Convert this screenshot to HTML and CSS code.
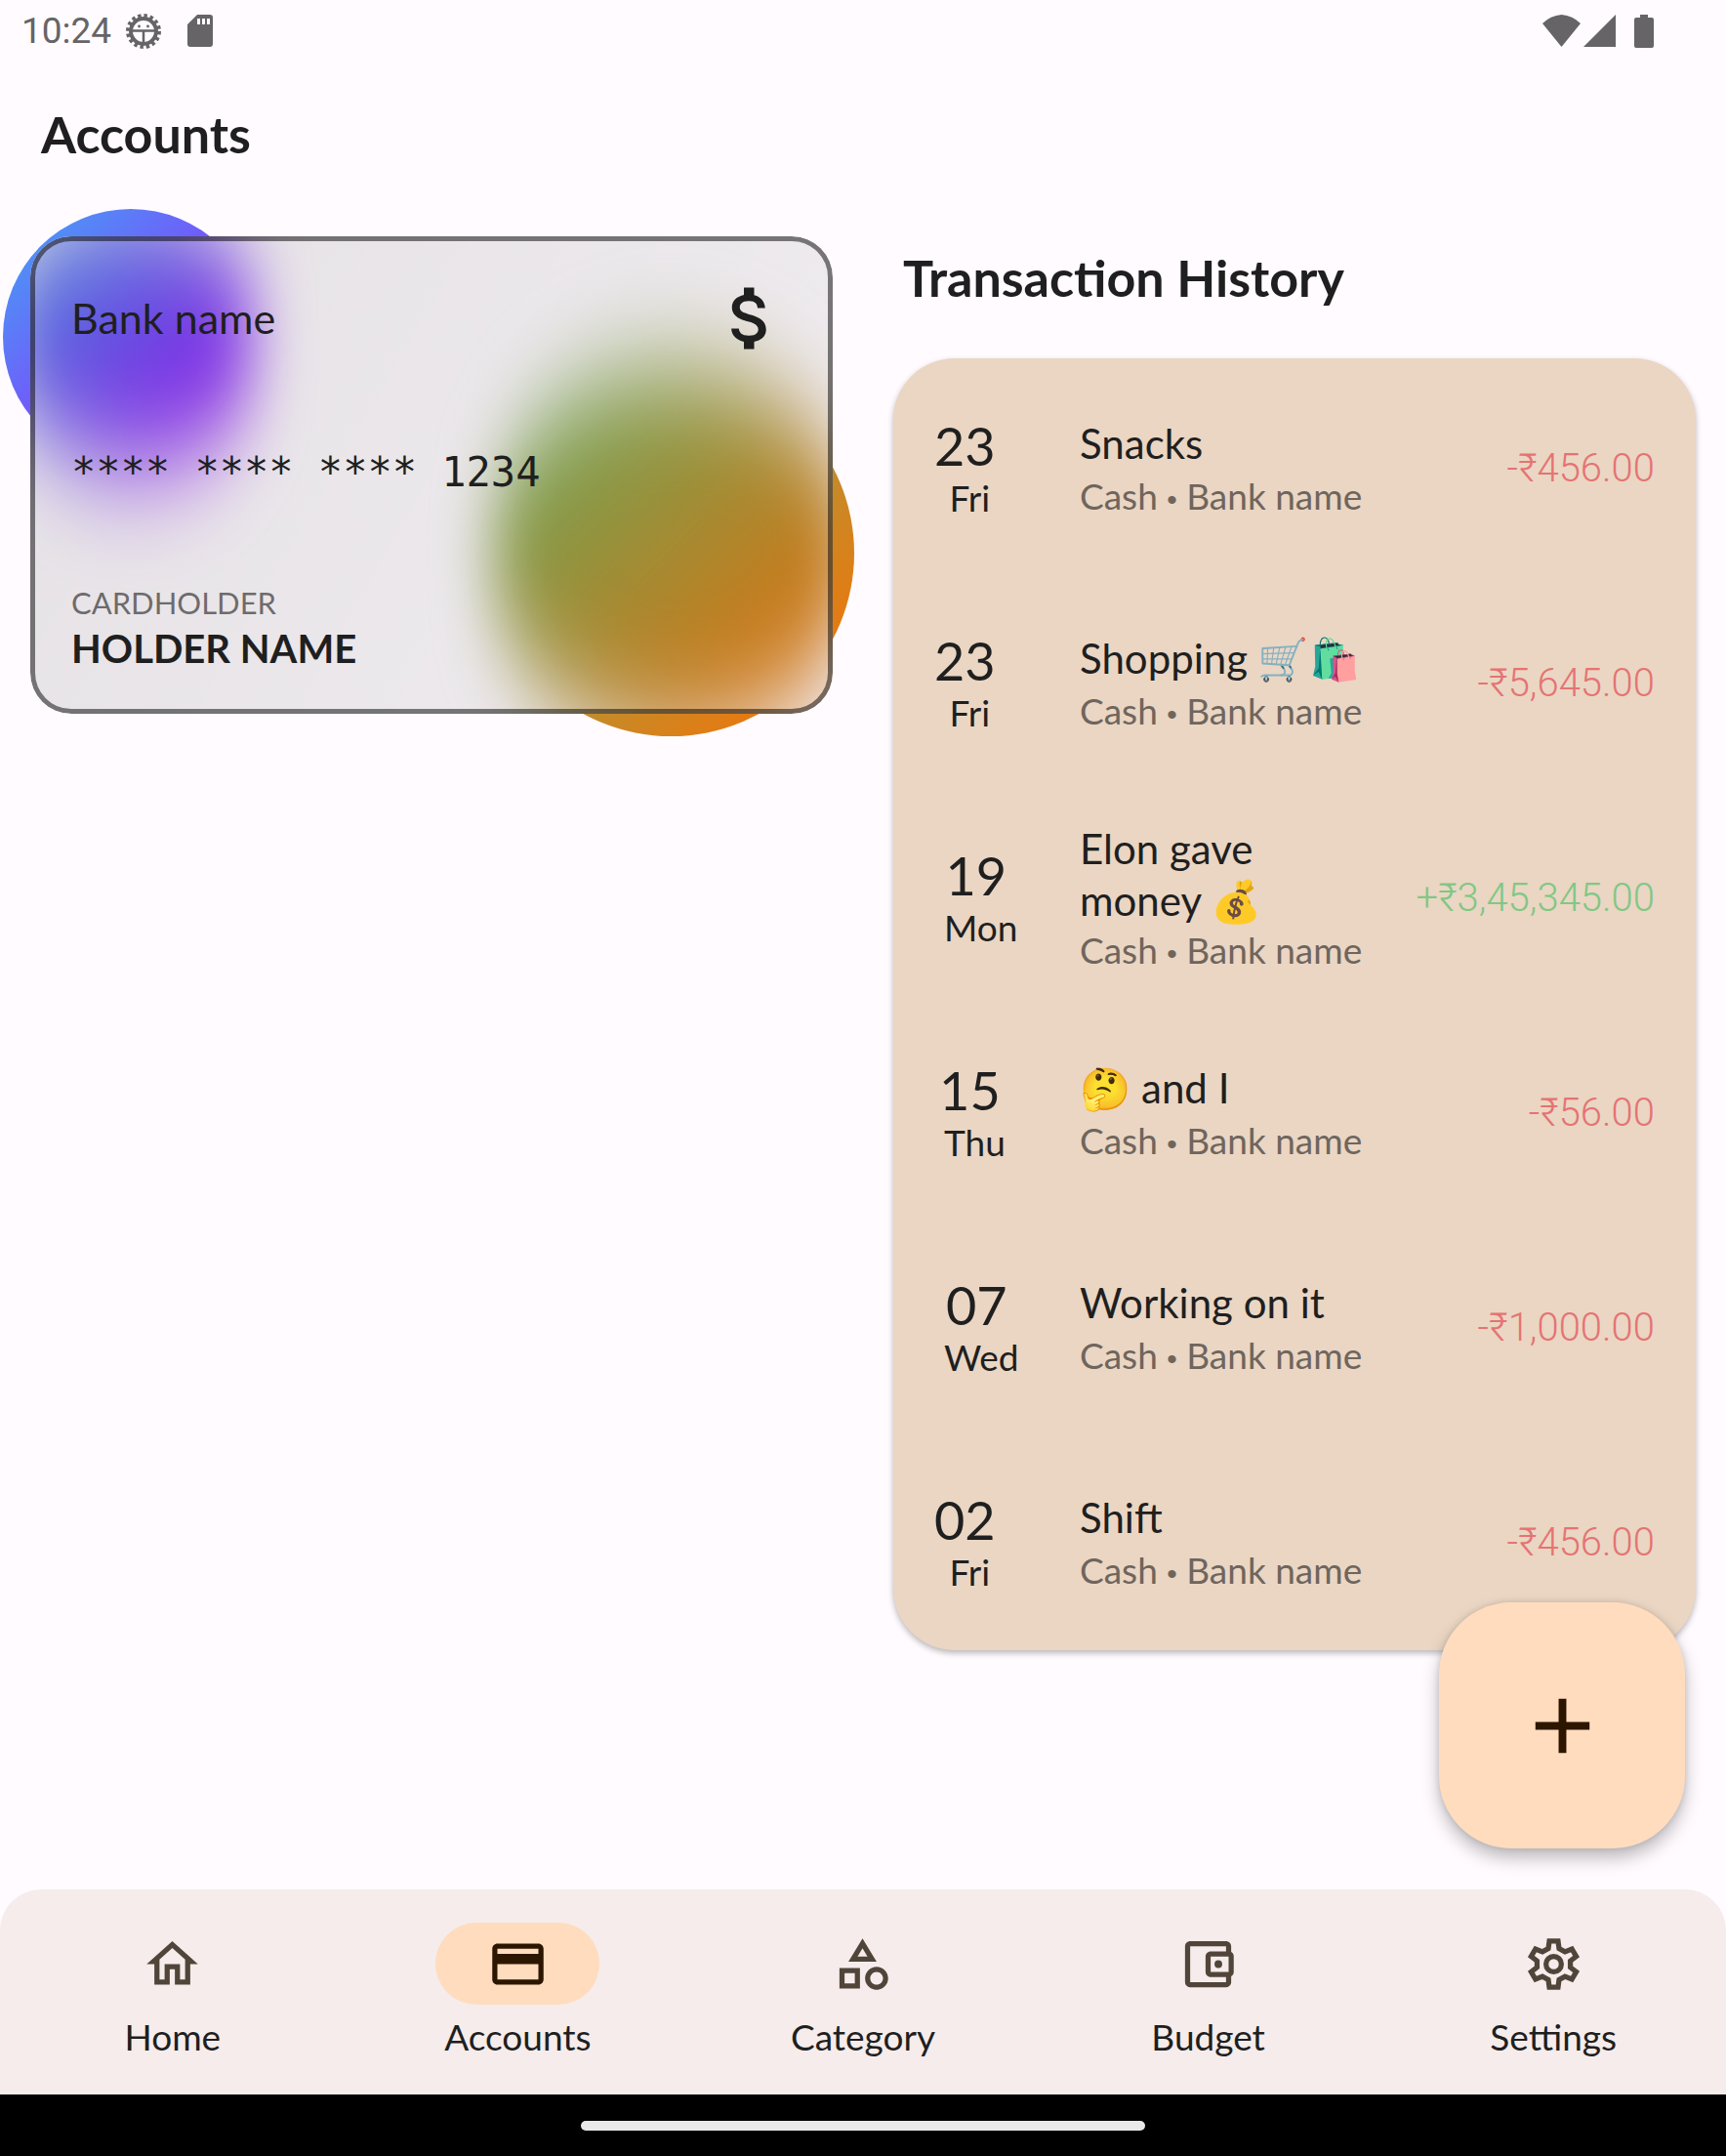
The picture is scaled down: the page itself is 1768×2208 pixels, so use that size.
FILE: index.html
```html
<!DOCTYPE html>
<html lang="en">
<head>
<meta charset="utf-8">
<meta name="viewport" content="width=device-width, initial-scale=1">
<title>Accounts</title>
<link rel="stylesheet" href="styles.css">
</head>
<body>
<div class="status">
  <span class="clock">10:24</span>
  <svg class="status-gear" viewBox="0 0 36 36" aria-hidden="true">
    <circle cx="18" cy="18" r="13" fill="none" stroke="currentColor" stroke-width="4"/>
    <circle cx="18" cy="18" r="16" fill="none" stroke="currentColor" stroke-width="4" stroke-dasharray="3.4 2.88"/>
    <path d="M5 17.500h26M18 18v13" stroke="currentColor" stroke-width="2.500" fill="none"/>
    <circle cx="13.500" cy="13" r="1.400" fill="currentColor"/><circle cx="22.500" cy="13" r="1.400" fill="currentColor"/>
  </svg>
  <svg class="status-sd" viewBox="0 0 26 34" aria-hidden="true">
    <path fill="currentColor" fill-rule="evenodd" d="M10 0h13a3 3 0 0 1 3 3v27a3 3 0 0 1-3 3H3a3 3 0 0 1-3-3V10zM10 4v6h3V4zm5 0v6h3V4zm5 0v6h3V4z"/>
  </svg>
  <span class="status-fill"></span>
  <svg class="status-wifi" viewBox="0 0 39 34" aria-hidden="true"><path fill="currentColor" d="M0 9Q8 1 19.500 0Q31 1 39 9L19.500 33z"/></svg>
  <svg class="status-cell" viewBox="0 0 33 34" aria-hidden="true"><path fill="currentColor" d="M33 0v33H0z"/></svg>
  <svg class="status-battery" viewBox="0 0 20 34" aria-hidden="true"><path fill="currentColor" d="M6 0h8v3h4a2 2 0 0 1 2 2v27a2 2 0 0 1-2 2H2a2 2 0 0 1-2-2V5a2 2 0 0 1 2-2h4z"/></svg>
</div>

<header class="topbar"><h1 class="heading">Accounts</h1></header>

<main class="content">
  <section class="pane wallet">
    <svg class="defs" aria-hidden="true">
      <filter id="frost" x="-60%" y="-80%" width="220%" height="260%" color-interpolation-filters="sRGB">
        <feGaussianBlur stdDeviation="28 56"/>
      </filter>
    </svg>
    <div class="card-stage">
      <span class="orb orb-blue"></span>
      <span class="orb orb-orange"></span>
      <article class="card">
        <div class="glass"><span class="orb orb-blue"></span><span class="orb orb-orange"></span></div>
        <div class="card-top">
          <span class="bank">Bank name</span>
          <svg class="currency" viewBox="0 0 24 24" aria-hidden="true"><path fill="currentColor" d="M11.800 10.900c-2.270-.59-3-1.200-3-2.150 0-1.090 1.010-1.850 2.700-1.850 1.780 0 2.440.85 2.500 2.100h2.210c-.07-1.720-1.120-3.300-3.210-3.810V3h-3v2.160c-1.940.42-3.500 1.680-3.500 3.610 0 2.310 1.910 3.460 4.700 4.130 2.500.6 3 1.480 3 2.410 0 .69-.49 1.790-2.700 1.790-2.060 0-2.870-.92-2.980-2.100h-2.200c.12 2.190 1.760 3.420 3.680 3.830V21h3v-2.150c1.950-.37 3.500-1.500 3.500-3.550 0-2.840-2.430-3.810-4.700-4.400z"/></svg>
        </div>
        <p class="number">**** **** **** 1234</p>
        <div class="holder">
          <span class="holder-label">CARDHOLDER</span>
          <strong class="holder-name">HOLDER NAME</strong>
        </div>
      </article>
    </div>
  </section>

  <section class="pane history">
    <h2 class="heading history-title">Transaction History</h2>
    <ul class="transactions">
      <li class="row">
        <div class="date"><span class="num">23</span><span class="day">Fri</span></div>
        <div class="info"><span class="title">Snacks</span><span class="sub">Cash <span class="dot">•</span> Bank name</span></div>
        <span class="amount">-₹456.00</span>
      </li>
      <li class="row">
        <div class="date"><span class="num">23</span><span class="day">Fri</span></div>
        <div class="info"><span class="title">Shopping 🛒🛍️</span><span class="sub">Cash <span class="dot">•</span> Bank name</span></div>
        <span class="amount">-₹5,645.00</span>
      </li>
      <li class="row">
        <div class="date"><span class="num">19</span><span class="day">Mon</span></div>
        <div class="info tight"><span class="title">Elon gave money 💰</span><span class="sub">Cash <span class="dot">•</span> Bank name</span></div>
        <span class="amount income">+₹3,45,345.00</span>
      </li>
      <li class="row">
        <div class="date"><span class="num">15</span><span class="day">Thu</span></div>
        <div class="info"><span class="title">🤔 and I</span><span class="sub">Cash <span class="dot">•</span> Bank name</span></div>
        <span class="amount">-₹56.00</span>
      </li>
      <li class="row">
        <div class="date"><span class="num">07</span><span class="day">Wed</span></div>
        <div class="info"><span class="title">Working on it</span><span class="sub">Cash <span class="dot">•</span> Bank name</span></div>
        <span class="amount">-₹1,000.00</span>
      </li>
      <li class="row">
        <div class="date"><span class="num">02</span><span class="day">Fri</span></div>
        <div class="info"><span class="title">Shift</span><span class="sub">Cash <span class="dot">•</span> Bank name</span></div>
        <span class="amount">-₹456.00</span>
      </li>
    </ul>
  </section>

  <button class="fab" type="button" aria-label="Add transaction">
    <svg class="fab-icon" viewBox="0 0 24 24" aria-hidden="true"><path fill="currentColor" d="M19 13h-6v6h-2v-6H5v-2h6V5h2v6h6z"/></svg>
  </button>
</main>

<nav class="tabs">
  <a class="tab" href="#home">
    <span class="pill"><svg class="tab-icon" viewBox="0 0 24 24" aria-hidden="true"><path d="M12 5.690l5 4.500V18h-2v-6H9v6H7v-7.810l5-4.500M12 3L2 12h3v8h6v-6h2v6h6v-8h3z"/></svg></span>
    <span class="tab-label">Home</span>
  </a>
  <a class="tab active" href="#accounts" aria-current="page">
    <span class="pill"><svg class="tab-icon" viewBox="0 0 24 24" aria-hidden="true"><path d="M20 4H4c-1.110 0-1.990.89-1.990 2L2 18c0 1.110.89 2 2 2h16c1.110 0 2-.89 2-2V6c0-1.110-.89-2-2-2zm0 14H4v-6h16v6zm0-10H4V6h16v2z"/></svg></span>
    <span class="tab-label">Accounts</span>
  </a>
  <a class="tab" href="#category">
    <span class="pill"><svg class="tab-icon" viewBox="0 0 24 24" aria-hidden="true"><path d="M12 2l-5.500 9h11L12 2zm0 3.840L13.930 9h-3.870L12 5.840zM17.500 13c-2.490 0-4.500 2.010-4.500 4.500s2.010 4.500 4.500 4.500 4.500-2.010 4.500-4.500-2.010-4.500-4.500-4.500zm0 7c-1.380 0-2.500-1.120-2.500-2.500s1.120-2.500 2.500-2.500 2.500 1.120 2.500 2.500-1.120 2.500-2.500 2.500zM3 21.500h8v-8H3v8zm2-6h4v4H5v-4z"/></svg></span>
    <span class="tab-label">Category</span>
  </a>
  <a class="tab" href="#budget">
    <span class="pill"><svg class="tab-icon" viewBox="0 0 24 24" aria-hidden="true"><path d="M21 7.280V5c0-1.100-.9-2-2-2H5c-1.110 0-2 .9-2 2v14c0 1.100.89 2 2 2h14c1.100 0 2-.9 2-2v-2.280c.59-.35 1-.98 1-1.720V9c0-.74-.41-1.370-1-1.720zM20 9v6h-7V9h7zM5 19V5h14v2h-6c-1.100 0-2 .9-2 2v6c0 1.100.9 2 2 2h6v2H5z"/><circle cx="16" cy="12" r="1.500"/></svg></span>
    <span class="tab-label">Budget</span>
  </a>
  <a class="tab" href="#settings">
    <span class="pill"><svg class="tab-icon" viewBox="0 0 24 24" aria-hidden="true"><path fill="none" stroke="currentColor" stroke-width="2" d="M10.300 3h3.400l.4 2.900 2.300 1.300 2.700-1.100 1.700 2.900-2.300 1.750v2.500l2.300 1.750-1.700 2.900-2.700-1.100-2.300 1.300-.4 2.900h-3.400l-.4-2.900-2.300-1.300-2.700 1.100-1.700-2.900 2.300-1.750v-2.500L3.200 9l1.700-2.900 2.700 1.100 2.300-1.300z"/><circle cx="12" cy="12" r="3" fill="none" stroke="currentColor" stroke-width="2"/></svg></span>
    <span class="tab-label">Settings</span>
  </a>
</nav>
<div class="gesture"><span class="gesture-bar"></span></div>
</body>
</html>
```

FILE: styles.css
```css
* { box-sizing: border-box; }

body {
  margin: 0;
  min-height: 100vh;
  display: flex;
  flex-direction: column;
  background: #fffbff;
  color: #1f1f1f;
  font-family: Lato, "Noto Color Emoji", sans-serif;
}

/* Status bar */
.status {
  display: flex;
  align-items: center;
  height: 63px;
  padding: 0 74px 0 22px;
  color: #666467;
}
.clock { font: 37px/62px Roboto, sans-serif; }
.status-gear { width: 36px; height: 36px; margin-left: 15px; }
.status-sd { width: 26px; height: 34px; margin-left: 27px; }
.status-fill { flex: 1; }
.status-wifi { width: 39px; height: 34px; }
.status-cell { width: 33px; height: 34px; margin-left: 3px; }
.status-battery { width: 20px; height: 34px; margin-left: 19px; }

.topbar {
  display: flex;
  align-items: center;
  height: 147px;
  padding: 2px 42px 0;
}
.heading {
  margin: 0;
  font-size: 52px;
  line-height: 67px;
  font-weight: 700;
}

.content {
  position: relative;
  flex: 1;
  display: grid;
  grid-template-columns: 1fr 1fr;
  align-items: start;
}
.pane { padding: 0 31px; }
.wallet { padding-top: 32px; }

/* Bank card */
.defs { position: absolute; width: 0; height: 0; }
.card-stage { position: relative; }
.orb { position: absolute; border-radius: 50%; }
.orb-blue {
  left: -28px;
  top: -28px;
  width: 262px;
  height: 262px;
  background: linear-gradient(135deg, #42a5f5, #aa00ff);
}
.orb-orange {
  right: -22px;
  bottom: -23px;
  width: 375px;
  height: 375px;
  background: linear-gradient(135deg, #66bb6a, #ff6d00);
}
.card {
  position: relative;
  isolation: isolate;
  display: flex;
  flex-direction: column;
  justify-content: space-between;
  min-height: 489px;
  padding: 42px;
  border-radius: 42px;
  overflow: hidden;
}
.card::after {
  content: "";
  position: absolute;
  inset: 0;
  border: 5px solid rgba(0, 0, 0, 0.5);
  border-radius: 42px;
}
.glass {
  position: absolute;
  inset: 0;
  z-index: -1;
  background: #fffbff;
}
.glass .orb { filter: url(#frost); }
.glass::after {
  content: "";
  position: absolute;
  inset: 0;
  background: linear-gradient(120deg, rgba(0, 0, 0, 0.1), rgba(0, 0, 0, 0.06));
}
.card-top {
  display: flex;
  align-items: center;
  justify-content: space-between;
}
.bank { font-size: 43px; line-height: 50px; }
.currency { width: 84px; height: 84px; }
.number {
  margin: 0;
  font: 42px/50px "DejaVu Sans Mono", monospace;
}
.holder { display: flex; flex-direction: column; gap: 4px; }
.holder-label {
  font-size: 31px;
  line-height: 36px;
  color: rgba(0, 0, 0, 0.55);
}
.holder-name { font-size: 40px; line-height: 50px; font-weight: 700; }

/* Transactions */
.history { padding-top: 41px; }
.history-title { padding-left: 10px; }
.transactions {
  margin: 49px 0 0;
  padding: 1px 0 2px;
  list-style: none;
  border-radius: 63px;
  background: #ead6c3;
  box-shadow: 0 3px 6px rgba(0, 0, 0, 0.28);
}
.row {
  display: grid;
  grid-template-columns: 149px 1fr auto;
  align-items: center;
  min-height: 220px;
  padding: 0 42px;
}
.date {
  justify-self: start;
  display: flex;
  flex-direction: column;
  align-items: center;
  padding-top: 4px;
}
.num { font-size: 54px; line-height: 60px; }
.day { padding-left: 10px; font-size: 37px; line-height: 46px; }
.info {
  display: flex;
  flex-direction: column;
  gap: 3px;
  padding-top: 2px;
  padding-right: 42px;
}
.tight { gap: 0; }
.title { font-size: 42px; line-height: 53px; }
.sub { font-size: 37px; line-height: 47px; color: #6f655d; }
.dot { font: 30px/30px "Liberation Sans", sans-serif; }
.amount {
  padding-top: 4px;
  font: 300 40px/46px Roboto, sans-serif;
  color: #e57373;
}
.income { color: #81c784; }

.fab {
  position: absolute;
  right: 42px;
  bottom: 42px;
  display: grid;
  place-items: center;
  width: 252px;
  height: 252px;
  padding: 0;
  border: 0;
  border-radius: 74px;
  background: #ffdcbe;
  color: #2c1600;
  box-shadow: 0 10px 18px rgba(0, 0, 0, 0.26), 0 0 6px rgba(0, 0, 0, 0.12);
}
.fab-icon { width: 95px; height: 95px; }

/* Bottom navigation */
.tabs {
  display: grid;
  grid-template-columns: repeat(5, 1fr);
  height: 210px;
  border-radius: 42px 42px 0 0;
  background: #f5eceb;
}
.tab {
  display: flex;
  flex-direction: column;
  align-items: center;
  gap: 10px;
  padding-top: 34px;
  color: #51453a;
  text-decoration: none;
}
.pill {
  display: grid;
  place-items: center;
  width: 168px;
  height: 84px;
  border-radius: 42px;
}
.tab-icon { width: 63px; height: 63px; fill: currentColor; }
.active { color: #2c1600; }
.active .pill { background: #ffdcbe; }
.tab-label { font-size: 37px; line-height: 46px; color: #1f1f1f; }

.gesture {
  display: flex;
  align-items: center;
  justify-content: center;
  height: 63px;
  background: #000;
}
.gesture-bar {
  width: 578px;
  height: 10px;
  border-radius: 5px;
  background: #e9e9e9;
}
```
